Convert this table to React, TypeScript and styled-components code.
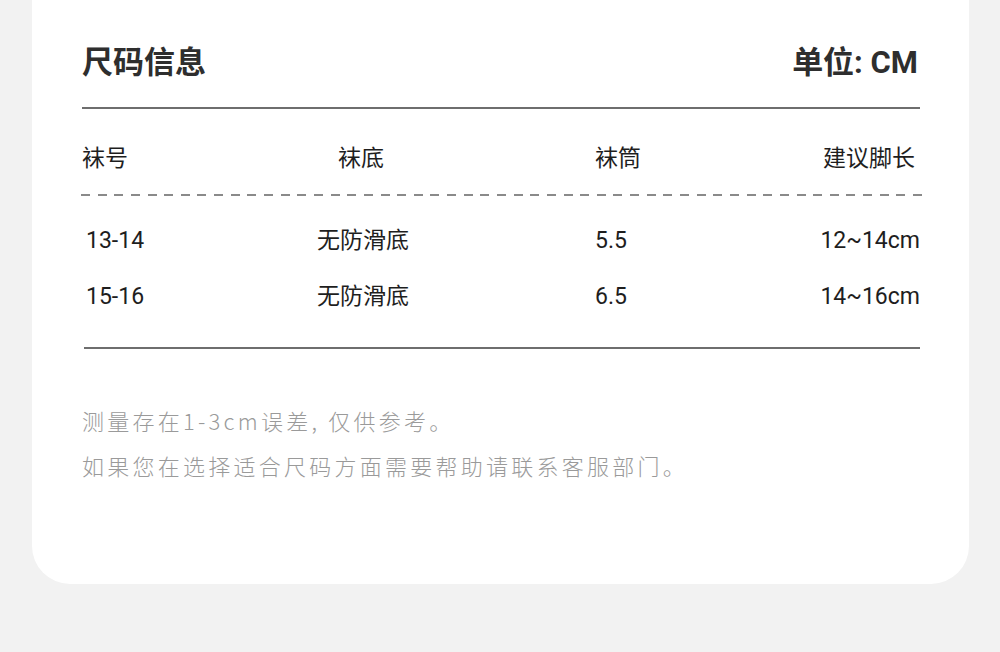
import React from 'react';
import styled, { createGlobalStyle } from 'styled-components';

const GlobalStyle = createGlobalStyle`
  html, body {
    margin: 0;
    padding: 0;
    background: #f2f2f2;
  }
  body {
    font-family: Roboto, "Noto Sans CJK SC", sans-serif;
  }
`;

const Page = styled.div`
  width: 1000px;
  height: 652px;
  overflow: hidden;
  padding: 0 31px 0 32px;
  box-sizing: border-box;
`;

const Card = styled.div`
  background: #fff;
  border-radius: 0 0 38px 38px;
  padding: 0 49px 96px 50px;
`;

const Header = styled.div`
  height: 90px;
  padding-top: 17px;
  display: flex;
  align-items: center;
  justify-content: space-between;
  border-bottom: 2px solid #6e6e6e;
`;

const Title = styled.h2`
  margin: 0;
  font-size: 31px;
  font-weight: 700;
  line-height: 1;
  color: #2e2e2e;
`;

const Unit = styled.span`
  font-size: 31px;
  font-weight: 700;
  line-height: 1;
  color: #2e2e2e;
  margin-right: 2px;
`;

const Grid = styled.div`
  display: grid;
  grid-template-columns: 180px 198px 1fr 1fr;
  align-items: center;
`;

const HeadRow = styled(Grid)`
  height: 30px;
  padding: 35px 0 20px;
`;

const BodyRow = styled(Grid)`
  height: 56px;
`;

const Cell = styled.div<{ $align?: 'left' | 'center' | 'right'; $inset?: string }>`
  text-align: ${(p) => p.$align || 'left'};
  padding: ${(p) => p.$inset || '0'};
  color: #1e1e1e;
  white-space: nowrap;
  font-size: 23px;
  line-height: 30px;
`;

const Dashed = styled.div`
  height: 1.5px;
  margin: 0 -2px 0 -1px;
  background: repeating-linear-gradient(to right, #8a8a8a 0 9px, transparent 9px 16.64px);
`;

const Body = styled.div`
  padding: 17px 0 22px;
  margin-left: 2px;
  border-bottom: 2px solid #6e6e6e;
`;

const Notes = styled.div`
  margin-top: 49px;
  font-family: "Noto Sans CJK SC", sans-serif;
  font-weight: 300;
  font-size: 22px;
  line-height: 45px;
  letter-spacing: 3.25px;
  color: #9a9a9a;
`;

const NoteLine = styled.p`
  margin: 0;
  white-space: nowrap;
`;

const rows = [
  { size: '13-14', sole: '无防滑底', tube: '5.5', foot: '12~14cm' },
  { size: '15-16', sole: '无防滑底', tube: '6.5', foot: '14~16cm' },
];

const App = () => (
  <>
    <GlobalStyle />
    <Page>
      <Card>
        <Header>
          <Title>尺码信息</Title>
          <Unit>单位: CM</Unit>
        </Header>
        <HeadRow>
          <Cell>袜号</Cell>
          <Cell $align="center">袜底</Cell>
          <Cell $inset="0 0 0 135px">袜筒</Cell>
          <Cell $align="right" $inset="0 5px 0 0">建议脚长</Cell>
        </HeadRow>
        <Dashed />
        <Body>
          {rows.map((r) => (
            <BodyRow key={r.size}>
              <Cell $inset="0 0 0 2px">{r.size}</Cell>
              <Cell $align="center">{r.sole}</Cell>
              <Cell $inset="0 0 0 133px">{r.tube}</Cell>
              <Cell $align="right">{r.foot}</Cell>
            </BodyRow>
          ))}
        </Body>
        <Notes>
          <NoteLine>测量存在1-3cm误差, 仅供参考。</NoteLine>
          <NoteLine>如果您在选择适合尺码方面需要帮助请联系客服部门。</NoteLine>
        </Notes>
      </Card>
    </Page>
  </>
);

export default App;
